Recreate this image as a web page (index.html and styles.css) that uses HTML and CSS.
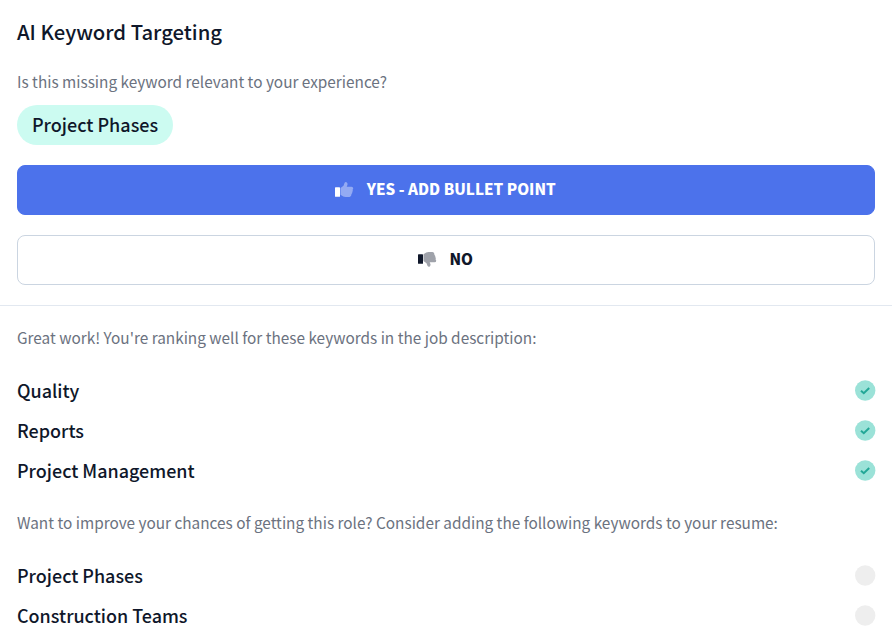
FILE: index.html
```html
<!DOCTYPE html>
<html lang="en">
<head>
<meta charset="utf-8">
<title>AI Keyword Targeting</title>
<link rel="stylesheet" href="styles.css">
</head>
<body>
<section class="question">
  <h1>AI Keyword Targeting</h1>
  <p class="muted">Is this missing keyword relevant to your experience?</p>
  <div class="chip"><span>Project Phases</span></div>
  <button class="btn primary">
    <svg class="thumb" viewBox="0 0 20 16"><rect x="0" y="5.200" width="5" height="9.600" rx=".6" fill="currentColor"/><path d="M5.500 6L8.500 3.700L9.600 .8Q10.300 -.2 11.500 .2Q12.900 1 12.400 3L11.700 4.700H16.500Q18.200 4.700 18.200 6.200Q18.200 7.200 17.500 7.700Q18.200 8.700 17.300 9.900Q17.500 11.200 16.500 12Q16.500 14.600 14.500 14.900H10.500Q8.500 14.900 5.500 12.700Z" fill="currentColor" opacity=".4"/></svg>
    <span>YES - ADD BULLET POINT</span>
  </button>
  <button class="btn">
    <svg class="thumb" viewBox="0 0 20 16"><rect x="0" y="2.200" width="5" height="9.600" rx=".6" fill="currentColor"/><path d="M5.500 8.900L8.500 11.200L9.600 14.100Q10.300 15.100 11.500 14.700Q12.900 13.900 12.400 11.900L11.700 10.200H16.500Q18.200 10.200 18.200 8.700Q18.200 7.700 17.500 7.200Q18.200 6.200 17.300 5Q17.500 3.700 16.500 2.900Q16.500 .3 14.500 0H10.500Q8.500 0 5.500 2.200Z" fill="currentColor" opacity=".4"/></svg>
    <span>NO</span>
  </button>
</section>
<section class="keywords">
  <p class="muted">Great work! You're ranking well for these keywords in the job description:</p>
  <ul>
    <li><span>Quality</span><svg class="dot" viewBox="0 0 21 21"><circle cx="10.200" cy="10.500" r="10.200" fill="#9be2d8"/><path d="M6 10.700L8.800 13.200L14.200 8" fill="none" stroke="#23a797" stroke-width="2"/></svg></li>
    <li><span>Reports</span><svg class="dot" viewBox="0 0 21 21"><circle cx="10.200" cy="10.500" r="10.200" fill="#9be2d8"/><path d="M6 10.700L8.800 13.200L14.200 8" fill="none" stroke="#23a797" stroke-width="2"/></svg></li>
    <li><span>Project Management</span><svg class="dot" viewBox="0 0 21 21"><circle cx="10.200" cy="10.500" r="10.200" fill="#9be2d8"/><path d="M6 10.700L8.800 13.200L14.200 8" fill="none" stroke="#23a797" stroke-width="2"/></svg></li>
  </ul>
  <p class="muted">Want to improve your chances of getting this role? Consider adding the following keywords to your resume:</p>
  <ul>
    <li><span>Project Phases</span><svg class="dot" viewBox="0 0 21 21"><circle cx="10.200" cy="10.500" r="10.200" fill="#eee"/></svg></li>
    <li><span>Construction Teams</span><svg class="dot" viewBox="0 0 21 21"><circle cx="10.200" cy="10.500" r="10.200" fill="#eee"/></svg></li>
  </ul>
</section>
</body>
</html>
```
FILE: styles.css
```css
* { box-sizing: border-box; }
body { margin: 0; height: 638px; overflow: hidden; background: #fff; color: #0f172a; font-family: "Noto Sans CJK JP", "Noto Sans", sans-serif; font-variant-ligatures: none; }
h1, p, ul { margin: 0; padding: 0; }
.question { height: 306px; padding: 15px 17px 0; border-bottom: 1px solid #e2e8f0; }
h1 { font-size: 20.27px; line-height: 32px; font-weight: 500; }
.muted { color: #6b7280; font-size: 15.35px; line-height: 24px; }
.question .muted { margin-top: 22px; }
.chip { display: flex; align-items: center; justify-content: center; width: 156px; height: 40px; margin-top: 12px; padding-bottom: 2px; border-radius: 20px; background: #ccfbf1; font-size: 18px; font-weight: 500; }
.btn { display: flex; align-items: center; justify-content: center; width: 100%; height: 50px; margin-top: 20px; padding: 0 1px 0 0; border: 1px solid #cbd5e1; border-radius: 8px; background: #fff; color: #0f172a; font: 900 15.2px "Noto Sans CJK JP", sans-serif; }
.btn span { line-height: 22px; padding-bottom: 4px; }
.primary { border-color: #4c72eb; background: #4c72eb; color: #fff; }
.thumb { width: 20px; height: 16px; margin-right: 11.5px; }
.keywords { padding: 19px 17px 0; }
ul { list-style: none; margin: 22px 0 19px; }
li { display: flex; justify-content: space-between; align-items: center; height: 40px; font-size: 17.95px; font-weight: 500; }
li span { line-height: 26px; padding-bottom: 2px; }
.dot { width: 21px; height: 21px; margin: 0 -1px 1px 0; }
```
